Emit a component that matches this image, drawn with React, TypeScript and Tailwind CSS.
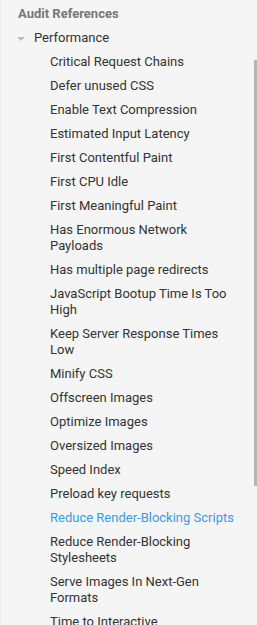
const audits: { label: string; active?: boolean }[] = [
  { label: "Critical Request Chains" },
  { label: "Defer unused CSS" },
  { label: "Enable Text Compression" },
  { label: "Estimated Input Latency" },
  { label: "First Contentful Paint" },
  { label: "First CPU Idle" },
  { label: "First Meaningful Paint" },
  { label: "Has Enormous Network Payloads" },
  { label: "Has multiple page redirects" },
  { label: "JavaScript Bootup Time Is Too High" },
  { label: "Keep Server Response Times Low" },
  { label: "Minify CSS" },
  { label: "Offscreen Images" },
  { label: "Optimize Images" },
  { label: "Oversized Images" },
  { label: "Speed Index" },
  { label: "Preload key requests" },
  { label: "Reduce Render-Blocking Scripts", active: true },
  { label: "Reduce Render-Blocking Stylesheets" },
  { label: "Serve Images In Next-Gen Formats" },
  { label: "Time to Interactive" },
];

export default function App() {
  return (
    <div
      className="relative h-screen overflow-hidden bg-[#f5f5f5] border-l border-[#ebebeb] text-[13px] text-[#333333]"
      style={{ fontFamily: "Roboto, 'Liberation Sans', sans-serif" }}
    >
      <div className="pt-[2px]">
        <div className="pl-[17px] py-1 leading-4 font-bold text-[#777777]">Audit References</div>
        <div className="flex items-center py-1 leading-4">
          <svg width="8" height="4" viewBox="0 0 8 4" className="ml-[16px] mr-[9px] mt-px">
            <path d="M0 0 L8 0 L4 4 Z" fill="#bdbdbd" />
          </svg>
          <span>Performance</span>
        </div>
        <ul className="pl-[49px] pr-[16px]">
          {audits.map((a) => (
            <li
              key={a.label}
              className={`py-1 leading-4 cursor-pointer ${a.active ? "text-[#3d9ad8]" : "text-[#333333]"}`}
            >
              {a.label}
            </li>
          ))}
        </ul>
      </div>
      <div className="absolute right-0 top-[60px] h-[426px] w-[3px] bg-[#b5b5b5]" />
    </div>
  );
}
